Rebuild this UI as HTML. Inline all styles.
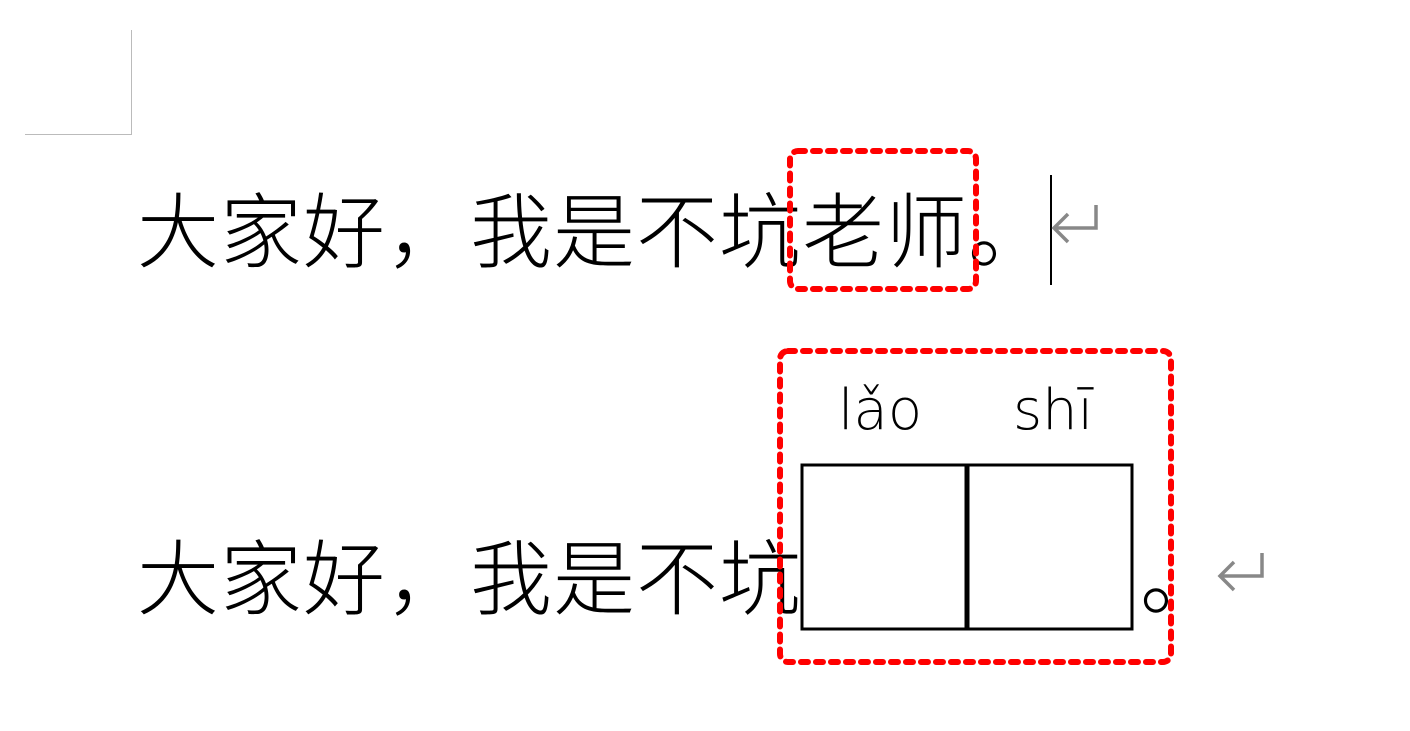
<!DOCTYPE html>
<html><head><meta charset="utf-8"><style>
body{margin:0;width:1410px;height:731px;background:#fff;position:relative;overflow:hidden;font-family:"Liberation Sans","Noto Sans CJK SC",sans-serif}
.c{position:absolute;font-size:82px;line-height:83px;color:#000;font-family:"Noto Sans CJK SC",sans-serif;font-weight:300}
.py{position:absolute;font-size:56px;line-height:56px;font-family:"DejaVu Sans","Liberation Sans",sans-serif;font-weight:200}
</style></head><body>
<div style="position:absolute;left:131px;top:30px;width:1px;height:105px;background:#bbb"></div>
<div style="position:absolute;left:25px;top:134px;width:107px;height:1px;background:#bbb"></div>

<div class="c" style="left:137px;top:184px">大</div><div class="c" style="left:220px;top:184px">家</div><div class="c" style="left:303px;top:184px">好</div><div class="c" style="left:386px;top:184px">，</div><div class="c" style="left:470px;top:184px">我</div><div class="c" style="left:553px;top:184px">是</div><div class="c" style="left:636px;top:184px">不</div><div class="c" style="left:719px;top:184px">坑</div><div class="c" style="left:802px;top:184px">老</div><div class="c" style="left:885px;top:184px">师</div><div class="c" style="left:968px;top:184px">。</div>

<div class="c" style="left:137px;top:531px">大</div><div class="c" style="left:220px;top:531px">家</div><div class="c" style="left:303px;top:531px">好</div><div class="c" style="left:386px;top:531px">，</div><div class="c" style="left:470px;top:531px">我</div><div class="c" style="left:553px;top:531px">是</div><div class="c" style="left:636px;top:531px">不</div><div class="c" style="left:719px;top:531px">坑</div>
<div class="c" style="left:1140px;top:531px">。</div>

<div style="position:absolute;left:1050px;top:175px;width:2px;height:110px;background:#000"></div>

<svg width="1410" height="731" style="position:absolute;left:0;top:0">
<rect x="790" y="151" width="186" height="138" rx="8" fill="none" stroke="#f00" stroke-width="6" stroke-dasharray="7 8" stroke-linecap="round"/>
<rect x="780" y="351" width="391" height="311" rx="8" fill="none" stroke="#f00" stroke-width="6" stroke-dasharray="7 8" stroke-linecap="round"/>
<rect x="802" y="465" width="330" height="164" fill="none" stroke="#000" stroke-width="3"/>
<line x1="967" y1="465" x2="967" y2="629" stroke="#000" stroke-width="5"/>
<g fill="none" stroke="#888" stroke-width="3.5">
<path d="M1096 205 V228 H1054 M1068 214 L1054 228 L1068 242"/>
<path d="M1262 553 V576 H1220 M1234 562 L1220 576 L1234 590"/>
</g>
</svg>
<div class="py" style="left:838px;top:383px">lǎo</div>
<div class="py" style="left:1013px;top:383px">shī</div>
</body></html>
